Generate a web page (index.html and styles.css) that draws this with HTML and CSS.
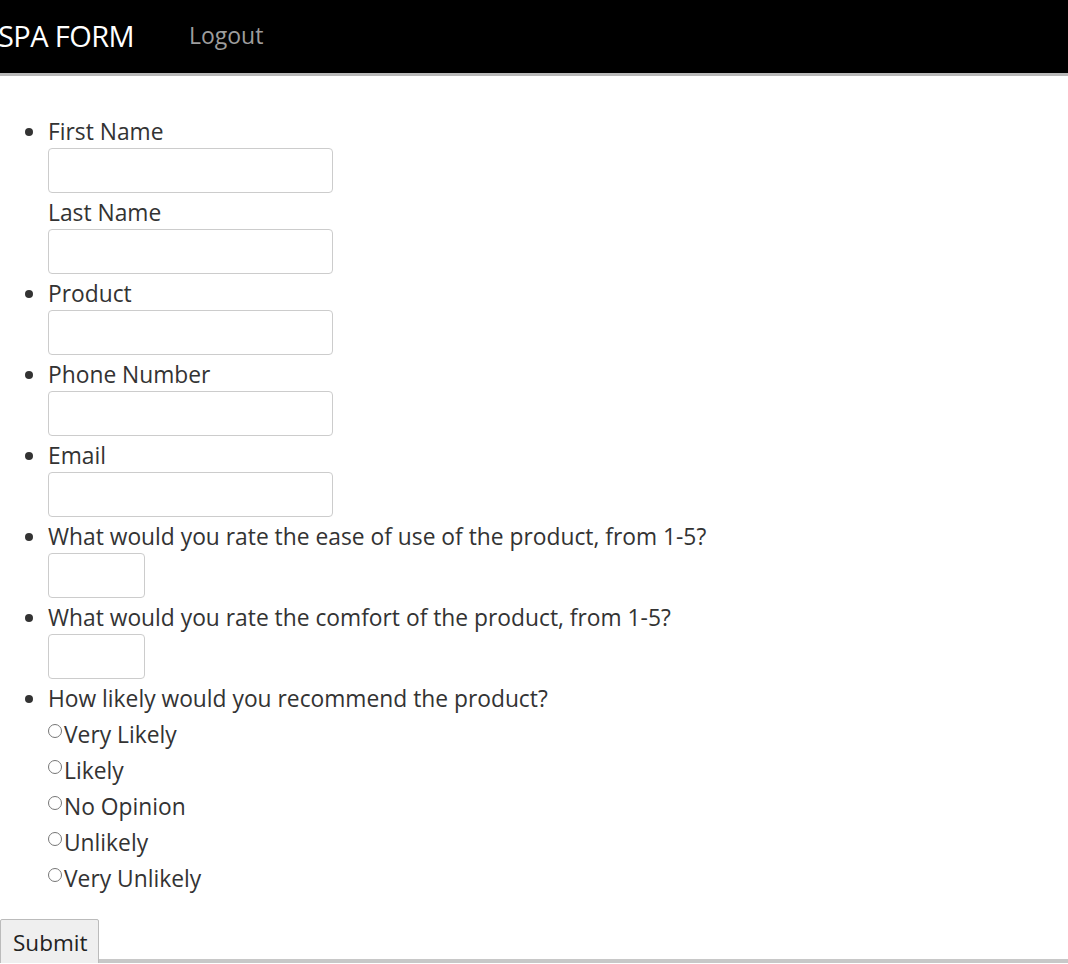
FILE: index.html
```html
<!DOCTYPE html>
<html>
<head>
<meta charset="utf-8">
<link rel="stylesheet" href="styles.css">
</head>
<body>
<nav class="topbar">
  <span class="brand">SPA FORM</span>
  <a class="logout" href="#">Logout</a>
</nav>
<form class="survey">
  <ul class="fields">
    <li>
      <label class="lbl">First Name</label>
      <input class="txt" type="text">
      <label class="lbl">Last Name</label>
      <input class="txt" type="text">
    </li>
    <li>
      <label class="lbl">Product</label>
      <input class="txt" type="text">
    </li>
    <li>
      <label class="lbl">Phone Number</label>
      <input class="txt" type="text">
    </li>
    <li>
      <label class="lbl">Email</label>
      <input class="txt" type="text">
    </li>
    <li>
      <label class="lbl">What would you rate the ease of use of the product, from 1-5?</label>
      <input class="txt small" type="text">
    </li>
    <li>
      <label class="lbl">What would you rate the comfort of the product, from 1-5?</label>
      <input class="txt small" type="text">
    </li>
    <li>
      <label class="lbl">How likely would you recommend the product?</label>
      <div class="radios">
        <label class="opt"><input type="radio" name="rec">Very Likely</label>
        <label class="opt"><input type="radio" name="rec">Likely</label>
        <label class="opt"><input type="radio" name="rec">No Opinion</label>
        <label class="opt"><input type="radio" name="rec">Unlikely</label>
        <label class="opt"><input type="radio" name="rec">Very Unlikely</label>
      </div>
    </li>
  </ul>
  <button class="submit" type="button">Submit</button>
</form>
<div class="bottombar"></div>
</body>
</html>
```
FILE: styles.css
```css
html, body {
  margin: 0;
  padding: 0;
  background: #fff;
}
body {
  font-family: "Open Sans", "Noto Sans", sans-serif;
  color: #333;
  font-size: 22.8px;
}
.topbar {
  height: 73px;
  background: #000;
  border-bottom: 3px solid #b8b8b8;
  display: flex;
  align-items: center;
  gap: 55px;
}
.brand {
  color: #fff;
  font-size: 29px;
  letter-spacing: -0.6px;
  margin-left: -2px;
  margin-top: -3px;
}
.logout {
  color: #9d9d9d;
  text-decoration: none;
  font-size: 23px;
  margin-top: -3px;
}
.survey {
  margin: 0;
}
.fields {
  margin: 42px 0 0 0;
  padding-left: 48px;
}
.fields li {
  margin: 0;
  line-height: 27px;
}
.lbl {
  display: block;
  line-height: 27px;
  color: #333;
}
.txt {
  display: block;
  box-sizing: border-box;
  width: 285px;
  height: 45px;
  border: 1px solid #ccc;
  border-radius: 4px;
  margin: 3px 0 6px 0;
  padding: 6px 12px;
  font-family: inherit;
  font-size: 20px;
}
.txt.small {
  width: 97px;
}
.radios {
  display: flex;
  flex-direction: column;
  padding-top: 4px;
}
.opt {
  display: flex;
  align-items: center;
  height: 36px;
  color: #333;
}
.opt input {
  margin: -6px 2px 0 0;
  width: 14px;
  height: 14px;
}
.submit {
  margin-top: 23px;
  margin-left: 0;
  height: 46px;
  padding: 0 11px 0 12px;
  font-family: inherit;
  font-size: 22.5px;
  line-height: 27px;
  color: #222;
  background: #efefef;
  border: 1px solid #bbb;
  border-radius: 2px;
}
.bottombar {
  height: 4px;
  background: #c8c8c8;
  margin-top: -6px;
}
```
